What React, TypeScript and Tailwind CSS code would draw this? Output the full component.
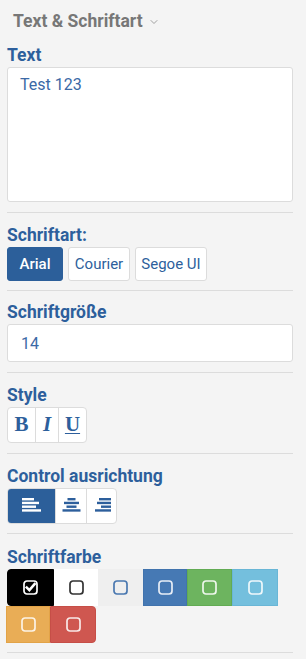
import { ChevronDown } from 'lucide-react';

const BLUE = 'text-[#2d5f9c]';

function Label({ children, className = '' }: { children: React.ReactNode; className?: string }) {
  return (
    <div className={`h-[20px] text-[17.5px] font-bold leading-[20px] ${BLUE} ${className}`}>
      {children}
    </div>
  );
}

function Divider({ className = '' }: { className?: string }) {
  return <div className={`h-px bg-[#dcdcdc] ${className}`} />;
}

// Ausrichtungs-Icons: vier Linien, je nach Bündigkeit versetzt
function AlignIcon({ rows, align, color }: { rows: number[]; align: 'left' | 'center' | 'right'; color: string }) {
  const W = 19;
  return (
    <svg width={W} height={14} viewBox={`0 0 ${W} 14`}>
      {rows.map((w, i) => {
        const x = align === 'left' ? 0 : align === 'right' ? W - w : (W - w) / 2;
        return <rect key={i} x={x} y={i * 3.75} width={w} height={2.4} fill={color} />;
      })}
    </svg>
  );
}

function Box({ color, checked = false }: { color: string; checked?: boolean }) {
  return (
    <svg width={15} height={15} viewBox="0 0 15 15">
      <rect x={1} y={1} width={13} height={13} rx={3} fill="none" stroke={color} strokeWidth={1.7} />
      {checked && (
        <path d="M3.8 7.6 L6.4 10.2 L11.6 4.2" fill="none" stroke={color} strokeWidth={2.6} strokeLinecap="square" />
      )}
    </svg>
  );
}

const swatches = [
  { w: 'w-[47px]', bg: 'bg-black border-black rounded-l-[4px]', icon: '#ffffff', checked: true },
  { w: 'w-[44px]', bg: 'bg-white border-white', icon: '#333333' },
  { w: 'w-[45px]', bg: 'bg-[#efefef] border-[#efefef]', icon: '#4a78b0' },
  { w: 'w-[44px]', bg: 'bg-[#4679b4] border-[#4173ad]', icon: '#e8eef6' },
  { w: 'w-[45px]', bg: 'bg-[#6db45f] border-[#62ab53]', icon: '#eef7ec' },
  { w: 'w-[46px]', bg: 'bg-[#74bfdd] border-[#69b6d6]', icon: '#eff8fb' },
  { w: 'w-[44px] -ml-px', bg: 'bg-[#e9ad56] border-[#e2a347]', icon: '#fcf3e6' },
  { w: 'w-[46px]', bg: 'bg-[#cf5750] border-[#c64e47] rounded-r-[4px]', icon: '#f9e9e8' },
];

export default function App() {
  return (
    <div
      className="min-h-[659px] bg-[#f4f4f4] pl-[7px] pr-[13px] pt-[11px]"
      style={{ fontFamily: 'Roboto, "Liberation Sans", sans-serif' }}
    >
      {/* Kopf */}
      <div className="flex h-[20px] items-center gap-[5px] pl-[6px] text-[17.5px] font-bold leading-[20px] text-[#777777]">
        <span>Text &amp; Schriftart</span>
        <ChevronDown size={12} strokeWidth={1.6} className="mt-[2px] text-[#8a8a8a]" />
      </div>

      {/* Text */}
      <Label className="mt-[14px]">Text</Label>
      <textarea
        defaultValue="Test 123"
        className="mt-[2px] block h-[135px] w-full resize-none rounded-[3px] border border-[#dcdcdc] bg-white px-[12px] pt-[7px] text-[16px] leading-[20px] text-[#3b69a6] outline-none"
      />
      <Divider className="mt-[10px]" />

      {/* Schriftart */}
      <Label className="mt-[12px]">Schriftart:</Label>
      <div className="mt-[2px] flex gap-[5px]">
        <button className="h-[34px] w-[56px] rounded-[3px] border border-[#2c5f9a] bg-[#2c5f9a] text-[15px] font-medium text-white">
          Arial
        </button>
        <button className={`h-[34px] w-[62px] rounded-[3px] border border-[#dcdcdc] bg-white text-[15px] ${BLUE}`}>
          Courier
        </button>
        <button className={`h-[34px] w-[72px] rounded-[3px] border border-[#dcdcdc] bg-white text-[15px] ${BLUE}`}>
          Segoe UI
        </button>
      </div>
      <Divider className="mt-[9px]" />

      {/* Schriftgröße */}
      <Label className="mt-[11px]">Schriftgröße</Label>
      <input
        defaultValue="14"
        className="mt-[2px] block h-[38px] w-full rounded-[3px] border border-[#dcdcdc] bg-white pl-[13px] text-[16px] text-[#3b69a6] outline-none"
      />
      <Divider className="mt-[10px]" />

      {/* Style */}
      <Label className="mt-[12px]">Style</Label>
      <div
        className={`mt-[2px] flex h-[36px] w-[80px] overflow-hidden rounded-[4px] border border-[#dcdcdc] bg-white text-[21px] font-bold ${BLUE}`}
        style={{ fontFamily: '"Liberation Serif", "DejaVu Serif", serif' }}
      >
        <div className="flex w-[27px] items-center justify-center">B</div>
        <div className="flex w-[23px] items-center justify-center border-l border-[#dcdcdc] italic">I</div>
        <div className="flex w-[28px] items-center justify-center border-l border-[#dcdcdc] underline decoration-1 underline-offset-2">
          U
        </div>
      </div>
      <Divider className="mt-[10px]" />

      {/* Control ausrichtung */}
      <Label className="mt-[12px]">Control ausrichtung</Label>
      <div className="mt-[2px] flex h-[36px] w-[110px] overflow-hidden rounded-[4px] border border-[#dcdcdc] bg-white">
        <div className="flex w-[47px] items-center justify-center bg-[#2c5f9a] pb-[2px]">
          <AlignIcon rows={[12, 17, 14, 19]} align="left" color="#ffffff" />
        </div>
        <div className="flex w-[31px] items-center justify-center border-l border-[#dcdcdc] pb-[2px]">
          <AlignIcon rows={[8, 15, 10, 18]} align="center" color="#2d5f9c" />
        </div>
        <div className="flex w-[30px] items-center justify-center border-l border-[#dcdcdc] pb-[2px]">
          <AlignIcon rows={[12, 14, 10, 16]} align="right" color="#2d5f9c" />
        </div>
      </div>
      <Divider className="mt-[9px]" />

      {/* Schriftfarbe */}
      <Label className="mt-[13px]">Schriftfarbe</Label>
      <div className="mt-[2px] flex flex-wrap">
        {swatches.map((s, i) => (
          <div key={i} className={`flex h-[37px] items-center justify-center border ${s.w} ${s.bg}`}>
            <Box color={s.icon} checked={s.checked} />
          </div>
        ))}
      </div>
      <Divider className="mt-[9px]" />
    </div>
  );
}
